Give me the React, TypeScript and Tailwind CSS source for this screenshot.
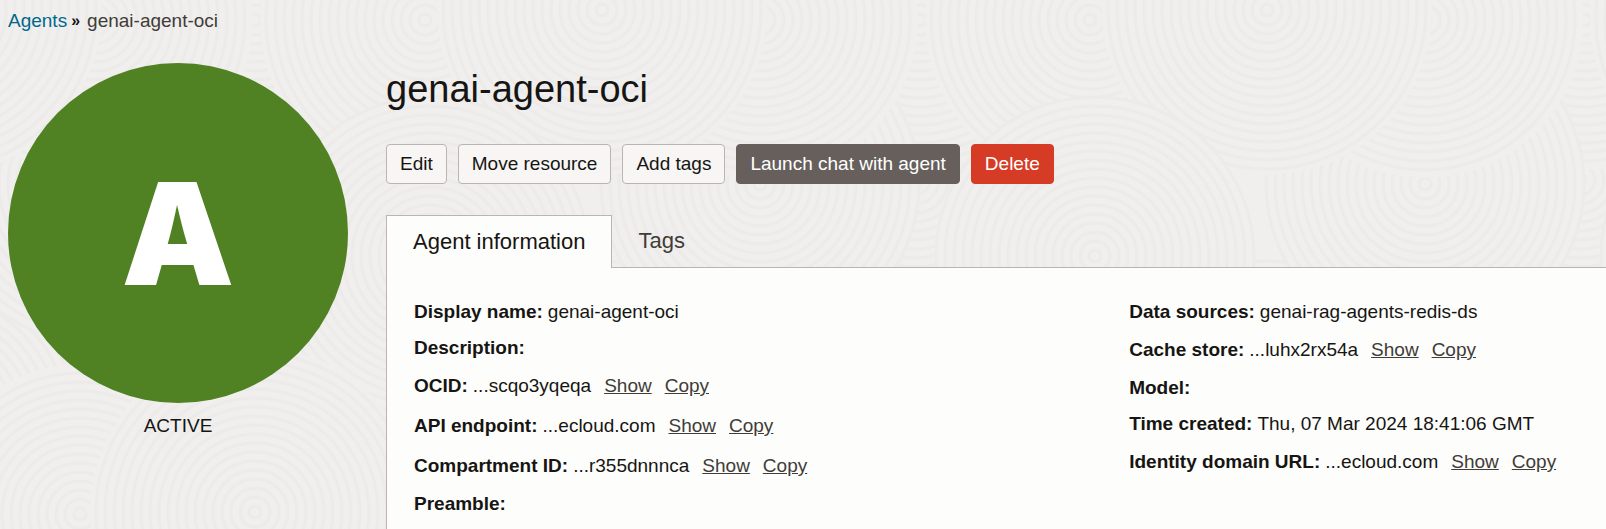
import type { ReactNode } from "react";

type Disc = { x: number; y: number; r: number };

const TILE = 665;

const discs: Disc[] = [
  { x: 330, y: 400, r: 190 },
  { x: 250, y: 180, r: 150 },
  { x: 600, y: 420, r: 170 },
  { x: 255, y: 20, r: 150 },
  { x: 425, y: 20, r: 165 },
  { x: 95, y: 184, r: 160 },
  { x: 95, y: 20, r: 158 },
  { x: 602, y: 10, r: 165 },
  { x: 430, y: 256, r: 160 },
  { x: 80, y: 514, r: 150 },
  { x: 255, y: 512, r: 165 },
];

const RINGS = [6, 15, 24, 33, 42, 51, 60, 69, 78, 87, 96, 105, 114, 123, 132, 141, 150, 159];

function Swirls() {
  return (
    <svg className="absolute inset-0 -z-10 h-full w-full" aria-hidden="true">
      <defs>
        <pattern id="swirls" width={TILE} height="600" patternUnits="userSpaceOnUse">
          {discs.map((d) =>
            [-TILE, 0, TILE].map((shift) => (
              <g key={`${d.x}-${d.y}-${shift}`} fill="none" stroke="#edebea" strokeWidth="3">
                <circle cx={d.x + shift} cy={d.y} r={d.r} fill="#f0efed" stroke="none" />
                {RINGS.filter((r) => r < d.r).map((r) => (
                  <circle key={r} cx={d.x + shift} cy={d.y} r={r} />
                ))}
              </g>
            )),
          )}
        </pattern>
      </defs>
      <rect width="100%" height="100%" fill="url(#swirls)" />
    </svg>
  );
}

const lightButton = "border-[#bab5b0] bg-[#f7f6f4] text-[#161513]";
const actions = [
  { label: "Edit", style: lightButton },
  { label: "Move resource", style: lightButton },
  { label: "Add tags", style: lightButton },
  { label: "Launch chat with agent", style: "border-[#665f5b] bg-[#665f5b] text-white" },
  { label: "Delete", style: "border-[#d63b25] bg-[#d63b25] text-white" },
];

function Field({ label, children, links = false }: { label: string; children?: ReactNode; links?: boolean }) {
  return (
    <div className={links ? "flex h-10 items-center" : "flex h-9 items-center"}>
      <dt className="font-bold">{label}:</dt>
      <dd className="ml-[5px] flex gap-[13px]">
        <span>{children}</span>
        {links && (
          <>
            <a href="#show" className="text-[#403c38] underline">Show</a>
            <a href="#copy" className="text-[#403c38] underline">Copy</a>
          </>
        )}
      </dd>
    </div>
  );
}

export default function App() {
  return (
    <div className="relative isolate flex min-h-screen flex-col bg-[#f0efed] pl-2 font-['Liberation_Sans',Arial,sans-serif] text-[19px] leading-6 whitespace-nowrap text-[#161513]">
      <Swirls />
      <nav aria-label="Breadcrumb" className="flex h-[63px] items-start pt-[9px]">
        <a href="#agents" className="text-[#00688c]">Agents</a>
        <span className="mr-[7px] ml-1 text-[16px] font-bold">»</span>
        <span className="text-[#403c38]">genai-agent-oci</span>
      </nav>
      <div className="flex flex-1 gap-[38px]">
        <aside className="w-[340px] shrink-0">
          <div className="flex aspect-square items-center justify-center rounded-full bg-[#508223] font-['Inter',sans-serif] text-[142px] leading-none font-black text-white">
            A
          </div>
          <p className="mt-[11px] text-center">ACTIVE</p>
        </aside>
        <main className="flex min-w-0 flex-1 flex-col">
          <h1 className="pt-1 text-[38px] leading-[44px]">genai-agent-oci</h1>
          <div className="mt-[33px] flex gap-[11px]">
            {actions.map((a) => (
              <button key={a.label} type="button" className={`h-10 rounded-[4px] border px-[13px] ${a.style}`}>
                {a.label}
              </button>
            ))}
          </div>
          <div role="tablist" className="mt-[31px] flex text-[22px]">
            <button
              type="button"
              role="tab"
              aria-selected="true"
              className="h-[53px] border border-b-0 border-[#bab5b0] bg-[#fdfdfb] px-[26px]"
            >
              Agent information
            </button>
            <div className="flex-1 border-b border-[#bab5b0]">
              <button type="button" role="tab" aria-selected="false" className="h-[52px] px-[26px] text-[#403c38]">
                Tags
              </button>
            </div>
          </div>
          <section className="grid flex-1 grid-cols-[3fr_2fr] border-l border-[#bab5b0] bg-[#fdfdfb] pt-[26px] pl-[27px]">
            <dl>
              <Field label="Display name">genai-agent-oci</Field>
              <Field label="Description" />
              <Field label="OCID" links>...scqo3yqeqa</Field>
              <Field label="API endpoint" links>...ecloud.com</Field>
              <Field label="Compartment ID" links>...r355dnnnca</Field>
              <Field label="Preamble" />
            </dl>
            <dl>
              <Field label="Data sources">genai-rag-agents-redis-ds</Field>
              <Field label="Cache store" links>...luhx2rx54a</Field>
              <Field label="Model" />
              <Field label="Time created">Thu, 07 Mar 2024 18:41:06 GMT</Field>
              <Field label="Identity domain URL" links>...ecloud.com</Field>
            </dl>
          </section>
        </main>
      </div>
    </div>
  );
}
